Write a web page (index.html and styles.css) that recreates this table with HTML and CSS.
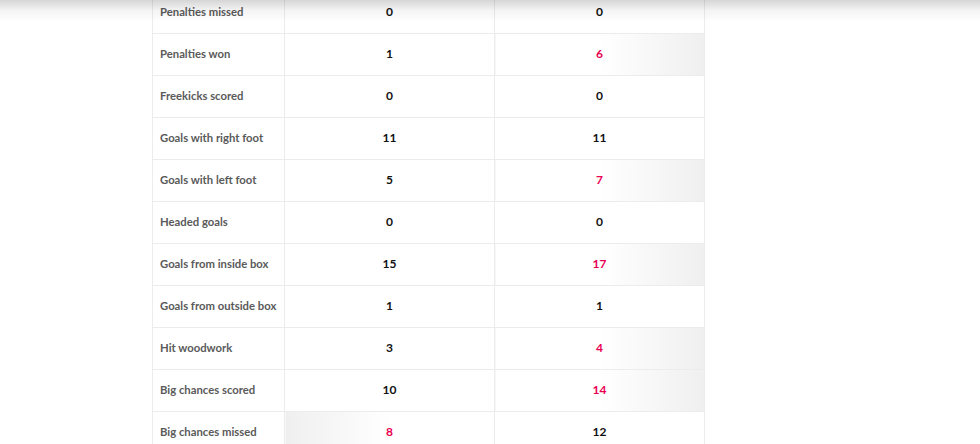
FILE: index.html
```html
<!DOCTYPE html>
<html>
<head>
<meta charset="utf-8">
<link rel="stylesheet" href="styles.css">
</head>
<body>
<div class="topshade"></div>
<div class="page">
<table class="stats">
<tbody>
<tr><td class="label">Penalties missed</td><td class="num">0</td><td class="num">0</td></tr>
<tr><td class="label">Penalties won</td><td class="num">1</td><td class="num win-r">6</td></tr>
<tr><td class="label">Freekicks scored</td><td class="num">0</td><td class="num">0</td></tr>
<tr><td class="label">Goals with right foot</td><td class="num">11</td><td class="num">11</td></tr>
<tr><td class="label">Goals with left foot</td><td class="num">5</td><td class="num win-r">7</td></tr>
<tr><td class="label">Headed goals</td><td class="num">0</td><td class="num">0</td></tr>
<tr><td class="label">Goals from inside box</td><td class="num">15</td><td class="num win-r">17</td></tr>
<tr><td class="label">Goals from outside box</td><td class="num">1</td><td class="num">1</td></tr>
<tr><td class="label">Hit woodwork</td><td class="num">3</td><td class="num win-r">4</td></tr>
<tr><td class="label">Big chances scored</td><td class="num">10</td><td class="num win-r">14</td></tr>
<tr><td class="label">Big chances missed</td><td class="num win-l">8</td><td class="num">12</td></tr>
</tbody>
</table>
</div>
</body>
</html>
```
FILE: styles.css
```css
html, body {
  margin: 0;
  padding: 0;
  background: #fff;
  overflow: hidden;
}
.topshade {
  position: fixed;
  top: 0;
  left: 0;
  right: 0;
  height: 22px;
  background: linear-gradient(to bottom, rgba(0,0,0,0.16), rgba(0,0,0,0.04) 50%, rgba(0,0,0,0));
  pointer-events: none;
  z-index: 2;
}
.page {
  padding-left: 152px;
  margin-top: -9px;
}
.stats {
  border-collapse: collapse;
  width: 553px;
  table-layout: fixed;
  font-family: Lato, "Open Sans", sans-serif;
  font-weight: 700;
  font-size: 11.3px;
}
.stats td {
  height: 42px;
  padding: 0 0 2px 0;
  border: 1px solid #ececec;
  box-sizing: border-box;
}
.stats td.label {
  width: 132px;
  padding-left: 7px;
  color: #5a5a5a;
}
.stats td.num {
  text-align: center;
  color: #111;
  font-size: 12px;
}
.stats td.num:nth-child(2) { width: 210px; }
.stats td.win-r {
  color: #e90052;
  background: linear-gradient(to right, #fff 50%, #efefef 100%);
}
.stats td.win-l {
  color: #e90052;
  background: linear-gradient(to left, #fff 50%, #efefef 100%);
}
```
